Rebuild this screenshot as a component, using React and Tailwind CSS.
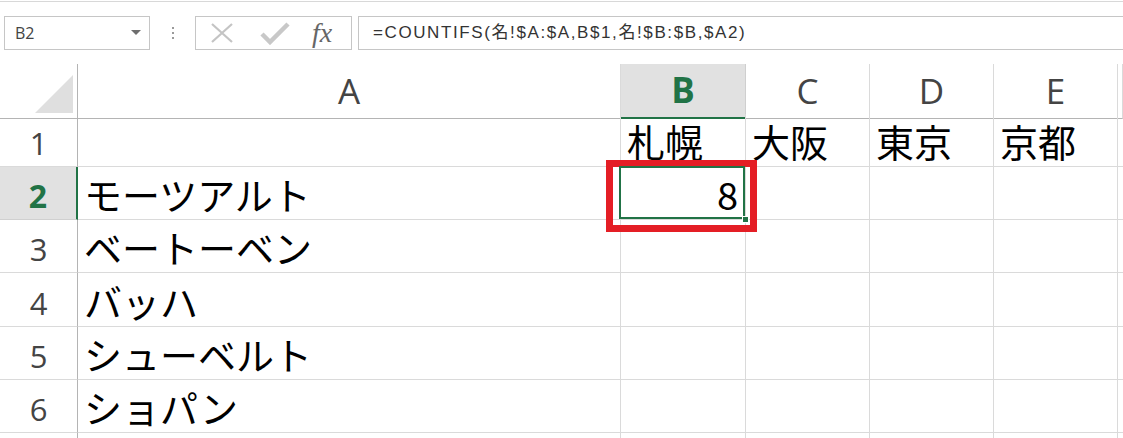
const cols = ['A', 'B', 'C', 'D', 'E', '']
const rows = [
  ['', '札幌', '大阪', '東京', '京都', ''],
  ['モーツアルト', '8', '', '', '', ''],
  ['ベートーベン', '', '', '', '', ''],
  ['バッハ', '', '', '', '', ''],
  ['シューベルト', '', '', '', '', ''],
  ['ショパン', '', '', '', '', ''],
  ['', '', '', '', '', ''],
]
const rowH = ['h-[53px]', 'h-[53px]', 'h-[53px]', 'h-[54px]', 'h-[53px]', 'h-[53px]', 'h-[53px]']

const grid = 'grid grid-cols-[78px_543px_125px_124px_124px_124px_1fr]'
const jp = "font-['Noto_Sans_CJK_JP',sans-serif]"

function Toolbar() {
  return (
    <div className="mt-[14px] flex h-[34px] items-stretch">
      <div className="ml-[4px] flex w-[146px] items-center justify-between border border-[#c6c6c6] pl-[10px] pr-[8px]">
        <span className="font-['Open_Sans',sans-serif] text-[16px] text-[#444]">B2</span>
        <svg width="10" height="6" viewBox="0 0 10 6">
          <path d="M0 0h10L5 5z" fill="#6e6e6e" />
        </svg>
      </div>
      <div className="flex w-[45px] flex-col items-center justify-center gap-[3px]">
        <span className="h-[2px] w-[2px] bg-[#9a9a9a]" />
        <span className="h-[2px] w-[2px] bg-[#9a9a9a]" />
        <span className="h-[2px] w-[2px] bg-[#9a9a9a]" />
      </div>
      <div className="flex w-[157px] items-center border border-[#c6c6c6] pl-[14px]">
        <svg width="24" height="22" viewBox="0 0 24 22">
          <path d="M2 2l20 18M22 2L2 20" stroke="#c4c4c4" strokeWidth="2.2" fill="none" />
        </svg>
        <svg className="ml-[26px]" width="30" height="24" viewBox="0 0 30 24">
          <path d="M2 13l8 8L28 3" stroke="#c8c8c8" strokeWidth="4.5" fill="none" />
        </svg>
        <span className="ml-[22px] font-['Liberation_Serif',serif] text-[28px] italic leading-none text-[#666]">
          fx
        </span>
      </div>
      <div className="ml-[6px] flex flex-1 items-center border-y border-l border-[#c6c6c6] pl-[14px]">
        <span className="font-['Liberation_Sans','Noto_Sans_CJK_JP',sans-serif] text-[17px] tracking-[1.6px] text-[#333]">
          =COUNTIFS(名!$A:$A,B$1,名!$B:$B,$A2)
        </span>
      </div>
    </div>
  )
}

function Header() {
  return (
    <div className={`${grid} h-[50px]`}>
      <div className="flex items-end justify-end border-r border-b border-[#b4b4b4] pr-[4px] pb-[5px]">
        <svg width="38" height="38" viewBox="0 0 38 38">
          <path d="M38 0V38H0z" fill="#dfdfdf" />
        </svg>
      </div>
      {cols.map((c, i) =>
        c === 'B' ? (
          <div
            key={i}
            className="flex items-center justify-center border-r border-b-2 border-r-[#cfcfcf] border-b-[#217346] bg-[#e1e1e1] font-['Open_Sans',sans-serif] text-[35px] font-bold text-[#217346]"
          >
            {c}
          </div>
        ) : (
          <div
            key={i}
            className="flex items-center justify-center border-r border-b border-r-[#dadada] border-b-[#b4b4b4] font-['Open_Sans',sans-serif] text-[35px] text-[#444]"
          >
            {c}
          </div>
        ),
      )}
    </div>
  )
}

function Row({ r, idx }) {
  const sel = idx === 1
  const label = idx < 6 ? idx + 1 : ''
  return (
    <div className={`${grid} ${rowH[idx]}`}>
      <div
        className={
          sel
            ? "flex items-end justify-center border-b border-r-2 border-b-[#d0d0d0] border-r-[#217346] bg-[#e1e1e1] pb-[3px] font-['Open_Sans',sans-serif] text-[32px] font-bold leading-[40px] text-[#217346]"
            : "flex items-end justify-center border-b border-r border-b-[#dadada] border-r-[#b4b4b4] pb-[3px] font-['Open_Sans',sans-serif] text-[31px] leading-[40px] text-[#444]"
        }
      >
        {label}
      </div>
      {r.map((v, i) =>
        sel && i === 1 ? (
          <div key={i} className="relative flex items-end justify-end border-r border-b border-[#dadada] pr-[7px] pb-[1px]">
            <span className={`${jp} text-[38px] leading-[48px] text-black`}>{v}</span>
            <div className="absolute -top-[7px] -left-[15px] h-[72px] w-[151px] border-[7px] border-[#e41e25]" />
            <div className="absolute -top-[1px] -left-[2px] right-0 bottom-0 border-2 border-[#217346]" />
            <div className="absolute -right-[4px] -bottom-[4px] h-[7px] w-[7px] border border-white bg-[#217346]" />
          </div>
        ) : (
          <div key={i} className="flex items-end border-r border-b border-[#dadada] pl-[6px] pb-[1px]">
            <span className={`${jp} text-[38px] leading-[48px] whitespace-nowrap text-black`}>{v}</span>
          </div>
        ),
      )}
    </div>
  )
}

export default function App() {
  return (
    <div className="relative h-[438px] w-[1123px] overflow-hidden bg-white">
      <div className="h-[2px] border-b border-[#d8d8d8]" />
      <Toolbar />
      <div className="mt-[14px]">
        <Header />
        {rows.map((r, i) => (
          <Row key={i} r={r} idx={i} />
        ))}
      </div>
    </div>
  )
}
